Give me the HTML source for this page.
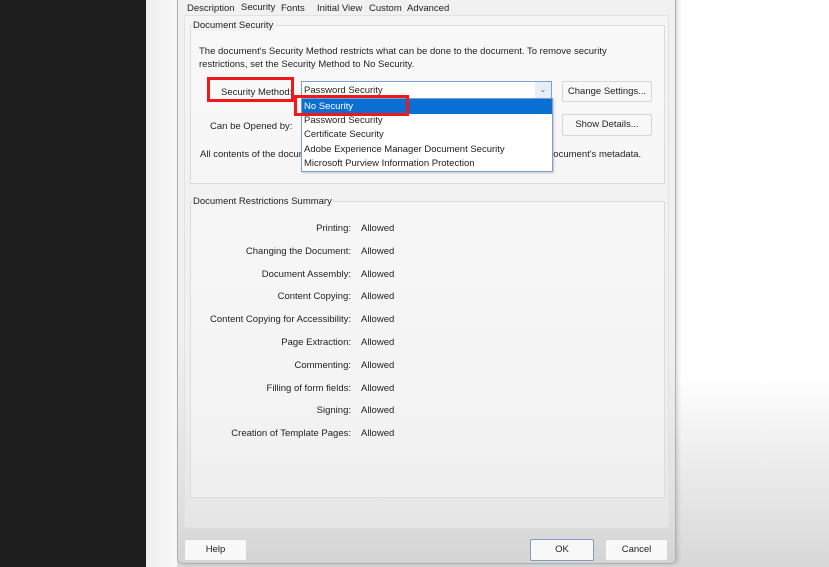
<!DOCTYPE html>
<html><head><meta charset="utf-8"><style>
*{margin:0;padding:0;box-sizing:border-box}
body{width:829px;height:567px;overflow:hidden;position:relative;font-family:"Liberation Sans",sans-serif;font-size:9.5px;color:#222;background:linear-gradient(#fff 0,#fff 66%,#ececec 82%,#d8d8d8 100%)}
.a{position:absolute;white-space:nowrap}
.blk{left:0;top:0;width:146px;height:567px;background:#1e1e1e}
.strip{left:146px;top:0;width:31px;height:567px;background:linear-gradient(90deg,#eeeeee,#f8f8f8)}
.dlg{left:177px;top:-4px;width:499px;height:568px;background:linear-gradient(#f1f1f1,#f0f0f0 60%,#e0e0e0 90%,#d4d4d4);border:1px solid #b0b0b0;border-radius:0 0 5px 5px;box-shadow:2px 0 4px rgba(0,0,0,.15)}
.panel{left:184px;top:15px;width:485px;height:513px;background:linear-gradient(#f5f5f5,#efefef 70%,#e6e6e6);border:1px solid #e2e2e2}
.grp{border:1px solid #dcdcdc;background:rgba(255,255,255,.35)}
.btn{background:#f8f8f8;border:1px solid #d6d6d6;border-radius:2px;text-align:center}
.red{border:3px solid #f01818}
</style></head><body>
<div class="a blk"></div>
<div class="a strip"></div>
<div class="a dlg"></div>
<div class="a panel"></div>
<div class="a" style="left:187px;top:3px">Description</div>
<div class="a" style="left:241px;top:2px">Security</div>
<div class="a" style="left:281px;top:3px">Fonts</div>
<div class="a" style="left:317px;top:3px">Initial View</div>
<div class="a" style="left:369px;top:3px">Custom</div>
<div class="a" style="left:407px;top:3px">Advanced</div>

<div class="a grp" style="left:190px;top:25px;width:475px;height:159px"></div>
<div class="a" style="left:192px;top:20px;background:#f3f3f3;padding:0 1px">Document Security</div>
<div class="a" style="left:199px;top:45px;line-height:13px">The document's Security Method restricts what can be done to the document. To remove security<br>restrictions, set the Security Method to No Security.</div>
<div class="a" style="left:221px;top:87px">Security Method:</div>
<div class="a" style="left:210px;top:121px">Can be Opened by:</div>
<div class="a" style="left:200px;top:149px">All contents of the document are encrypted and search engines cannot access the document's metadata.</div>
<div class="a btn" style="left:562px;top:81px;width:90px;height:21px;line-height:19px">Change Settings...</div>
<div class="a btn" style="left:562px;top:114px;width:90px;height:22px;line-height:20px">Show Details...</div>

<div class="a" style="left:301px;top:81px;width:251px;height:18px;background:#fff;border:1px solid #7a9fd0;padding:3px 0 0 2px">Password Security<span style="position:absolute;right:0;top:0;width:16px;height:16px;background:#e8eef7;color:#666;font-size:8px;text-align:center;line-height:15px">⌄</span></div>
<div class="a" style="left:301px;top:98px;width:252px;height:74px;background:#fff;border:1px solid #7a9fd0;box-shadow:1px 1px 2px rgba(0,0,0,.2)">
<div style="height:15px;background:#0a6fd3;color:#fff;padding:2px 0 0 2px">No Security</div>
<div style="line-height:14.3px;padding-left:2px">Password Security<br>Certificate Security<br>Adobe Experience Manager Document Security<br>Microsoft Purview Information Protection</div>
</div>
<div class="a red" style="left:207px;top:77px;width:87px;height:25px"></div>
<div class="a red" style="left:294px;top:95px;width:115px;height:21px"></div>

<div class="a grp" style="left:190px;top:201px;width:475px;height:297px"></div>
<div class="a" style="left:192px;top:196px;background:#f3f3f3;padding:0 1px">Document Restrictions Summary</div>
<div class="a" style="left:190px;top:218px;width:161px;text-align:right;line-height:22.8px">Printing:<br>Changing the Document:<br>Document Assembly:<br>Content Copying:<br>Content Copying for Accessibility:<br>Page Extraction:<br>Commenting:<br>Filling of form fields:<br>Signing:<br>Creation of Template Pages:</div>
<div class="a" style="left:361px;top:218px;line-height:22.8px">Allowed<br>Allowed<br>Allowed<br>Allowed<br>Allowed<br>Allowed<br>Allowed<br>Allowed<br>Allowed<br>Allowed</div>

<div class="a btn" style="left:184px;top:539px;width:63px;height:22px;line-height:20px">Help</div>
<div class="a btn" style="left:530px;top:539px;width:64px;height:22px;line-height:20px;border-color:#7f9fc0">OK</div>
<div class="a btn" style="left:605px;top:539px;width:63px;height:22px;line-height:20px">Cancel</div>
</body></html>
